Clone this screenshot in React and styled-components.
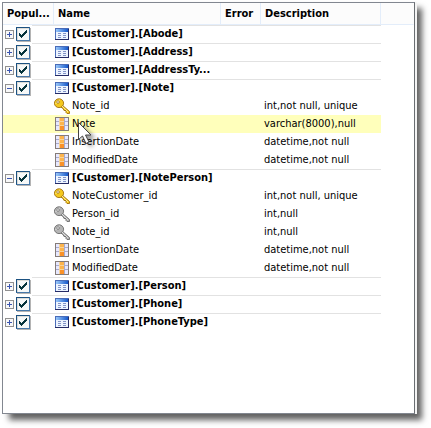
import React, { useState } from 'react'
import styled, { createGlobalStyle } from 'styled-components'

const GlobalStyle = createGlobalStyle`
  * {
    box-sizing: border-box;
  }

  body {
    margin: 0;
    background: #ffffff;
    color: #000000;
    font-family: 'DejaVu Sans Condensed', 'Noto Sans', sans-serif;
    font-size: 11px;
  }
`

const Page = styled.main`
  display: flex;
  min-height: 100vh;
  padding: 2px 16px 14px 2px;
`

const Panel = styled.section`
  flex: 1;
  min-width: 0;
  background: #ffffff;
  border: 1px solid #828790;
  border-right-color: #6a6e72;
  box-shadow: 2px 0 0 #f4f4f4, 7px 6px 6px rgba(0, 0, 0, 0.62);
`

const Grid = styled.table`
  width: 100%;
  table-layout: fixed;
  border-spacing: 0;
`

const HeadCell = styled.th`
  height: 22px;
  padding: 0 4px;
  background: #fcfcfc;
  border-right: 1px solid ${props => (props.$last ? '#fcfcfc' : '#e3edfa')};
  border-bottom: 1px solid #e3edfa;
  text-align: left;
  white-space: nowrap;
  overflow: hidden;
`

const Row = styled.tr`
  background: ${props => (props.$active ? '#ffffbb' : 'transparent')};
`

const Cell = styled.td`
  height: 18px;
  padding: 0 0 0 ${props => props.$indent || 0}px;
  border-top: 1px solid ${props => (props.$line ? '#e2e2e2' : 'transparent')};
  line-height: 16px;
  vertical-align: top;
  white-space: nowrap;
`

const Filler = styled.td`
  background: #ffffff;
`

const Controls = styled.div`
  display: flex;
  align-items: center;
  gap: 2px;
  height: 16px;
  padding-left: 2px;
`

const Label = styled.div`
  display: flex;
  align-items: center;
  gap: 2px;
  height: 16px;
  font-weight: ${props => (props.$bold ? 'bold' : 'normal')};
`

const Toggle = styled.button`
  display: flex;
  flex: none;
  width: 9px;
  height: 9px;
  padding: 0;
  border: 0;
  background: none;
`

const CheckBox = styled.span`
  display: grid;
  flex: none;
  width: 14px;
  height: 14px;

  > * {
    grid-area: 1 / 1;
  }
`

const CheckInput = styled.input`
  appearance: none;
  width: 14px;
  height: 14px;
  margin: 0;
  border: 1px solid #1c5180;
  border-right-color: #4878a8;
  border-bottom-color: #4878a8;
  box-shadow: inset 1px 1px 0 #dcdcd7, 1px 1px 0 #b4b4b4;
  background: #f6f8f8;

  &:not(:checked) + svg {
    visibility: hidden;
  }
`

const Icon = styled.svg`
  display: block;
  flex: none;
  pointer-events: none;
`

const Pointer = styled.svg`
  position: absolute;
  top: 121px;
  left: 77px;
  pointer-events: none;
  filter: drop-shadow(4px 3px 2px rgba(0, 0, 0, 0.4));
`

const Check = ({ label }) => (
  <CheckBox>
    <CheckInput type="checkbox" aria-label={label} defaultChecked />
    <Icon width="14" height="14" viewBox="0 0 14 14" shapeRendering="crispEdges">
      <path
        d="M3 6h1v1h1v1h1V7h1V6h1V5h1V4h1V3h1v3h-1v1H9v1H8v1H7v1H6v1H5v-1H4V9H3z"
        fill="#06343c"
      />
    </Icon>
  </CheckBox>
)

const ToggleIcon = ({ open }) => (
  <Icon width="9" height="9" viewBox="0 0 9 9" shapeRendering="crispEdges">
    <rect x="0.5" y="0.5" width="8" height="8" fill="#f8f8f8" stroke="#919191" />
    <path d={open ? 'M2 4.5h5' : 'M2 4.5h5M4.5 2v5'} stroke="#3b55b0" />
  </Icon>
)

const TableIcon = () => (
  <Icon width="16" height="16" viewBox="0 0 16 16" shapeRendering="crispEdges">
    <defs>
      <linearGradient id="titlebar">
        <stop offset="0" stopColor="#a4d0fc" />
        <stop offset="1" stopColor="#0c50c8" />
      </linearGradient>
    </defs>
    <path fill="#edf4ff" d="M1 2h14v12H1z" />
    <path fill="url(#titlebar)" d="M1 2h14v4H1z" />
    <path fill="#4a6cb8" d="M1 2h14v1H1zM1 2h1v12H1z" />
    <path fill="#262c66" d="M14 3h1v11H14zM1 13h14v1H1z" />
    <path
      fill="#8294c8"
      d="M4 7h3v1H4zM4 9h3v1H4zM4 11h3v1H4zM9 7h3v1H9zM9 9h3v1H9zM9 11h3v1H9z"
    />
  </Icon>
)

const ColumnIcon = () => (
  <Icon width="16" height="16" viewBox="0 0 16 16" shapeRendering="crispEdges">
    <path fill="#857c78" d="M1 1h14v14H1z" />
    <path fill="#a9abcd" d="M2 2h12v12H2z" />
    <path
      fill="#e6e8ff"
      d="M2 2h3v3H2zM2 6h3v3H2zM2 10h3v4H2zM11 2h3v3h-3zM11 6h3v3h-3zM11 10h3v4h-3z"
    />
    <path fill="#f8d49a" d="M5 2h5v12H5z" />
    <path fill="#fdb44c" d="M6 2h4v3H6zM6 6h4v3H6z" />
    <path fill="#fa9128" d="M6 10h4v4H6z" />
  </Icon>
)

const KeyIcon = ({ gold }) => {
  const edge = gold ? '#a07010' : '#6c6c6c'
  const fill = gold ? '#f4c81c' : '#b4b4b4'
  const shine = gold ? '#fff08a' : '#e0e0e0'
  return (
    <Icon width="16" height="16" viewBox="0 0 16 16">
      <path
        d="M7.5 6.5l8 7v2h-2.5l-1-1v-2h-2l-1-2-3-2z"
        fill={fill}
        stroke={edge}
        strokeWidth="0.9"
        strokeLinejoin="round"
      />
      <ellipse cx="5" cy="5.2" rx="4.6" ry="4.4" fill={fill} stroke={edge} strokeWidth="0.9" />
      <path d="M1.8 6q0-4 4-4M8 8l6 6" fill="none" stroke={shine} />
      <circle cx="4" cy="4" r="1.3" fill="#ffffff" stroke={edge} strokeWidth="0.8" />
    </Icon>
  )
}

const icons = {
  column: <ColumnIcon />,
  key: <KeyIcon gold />,
  foreign: <KeyIcon />
}

const tables = [
  { name: '[Customer].[Abode]' },
  { name: '[Customer].[Address]' },
  { name: '[Customer].[AddressTy...' },
  {
    name: '[Customer].[Note]',
    columns: [
      { icon: 'key', name: 'Note_id', type: 'int,not null, unique' },
      { icon: 'column', name: 'Note', type: 'varchar(8000),null', active: true },
      { icon: 'column', name: 'InsertionDate', type: 'datetime,not null' },
      { icon: 'column', name: 'ModifiedDate', type: 'datetime,not null' }
    ]
  },
  {
    name: '[Customer].[NotePerson]',
    columns: [
      { icon: 'key', name: 'NoteCustomer_id', type: 'int,not null, unique' },
      { icon: 'foreign', name: 'Person_id', type: 'int,null' },
      { icon: 'foreign', name: 'Note_id', type: 'int,null' },
      { icon: 'column', name: 'InsertionDate', type: 'datetime,not null' },
      { icon: 'column', name: 'ModifiedDate', type: 'datetime,not null' }
    ]
  },
  { name: '[Customer].[Person]' },
  { name: '[Customer].[Phone]' },
  { name: '[Customer].[PhoneType]' }
]

const TableGroup = ({ table }) => {
  const columns = table.columns || []
  const [open, setOpen] = useState(columns.length > 0)
  return (
    <tbody>
      <Row>
        <Cell>
          <Controls>
            <Toggle aria-label={table.name} aria-expanded={open} onClick={() => setOpen(!open)}>
              <ToggleIcon open={open} />
            </Toggle>
            <Check label={table.name} />
          </Controls>
        </Cell>
        <Cell $line />
        <Cell $line>
          <Label $bold>
            <TableIcon />
            {table.name}
          </Label>
        </Cell>
        <Cell $line />
        <Cell $line />
        <Filler />
      </Row>
      {open &&
        columns.map(column => (
          <Row key={column.name} $active={column.active}>
            <Cell />
            <Cell />
            <Cell>
              <Label>
                {icons[column.icon]}
                {column.name}
              </Label>
            </Cell>
            <Cell />
            <Cell $indent={3}>{column.type}</Cell>
            <Filler />
          </Row>
        ))}
    </tbody>
  )
}

export default function App() {
  return (
    <>
      <GlobalStyle />
      <Page>
        <Panel>
          <Grid>
            <colgroup>
              <col width="29" />
              <col width="22" />
              <col width="167" />
              <col width="40" />
              <col width="120" />
              <col />
            </colgroup>
            <thead>
              <tr>
                <HeadCell colSpan={2}>Popul...</HeadCell>
                <HeadCell>Name</HeadCell>
                <HeadCell>Error</HeadCell>
                <HeadCell>Description</HeadCell>
                <HeadCell as="td" $last />
              </tr>
            </thead>
            {tables.map(table => (
              <TableGroup key={table.name} table={table} />
            ))}
          </Grid>
        </Panel>
      </Page>
      <Pointer width="16" height="25" viewBox="0 0 16 25">
        <path
          d="M1.5 1.5v17l4-3.5 3.5 7.5 3-1.5-3.5-7h5.500z"
          fill="#ffffff"
          stroke="#444444"
          strokeLinejoin="round"
        />
      </Pointer>
    </>
  )
}
